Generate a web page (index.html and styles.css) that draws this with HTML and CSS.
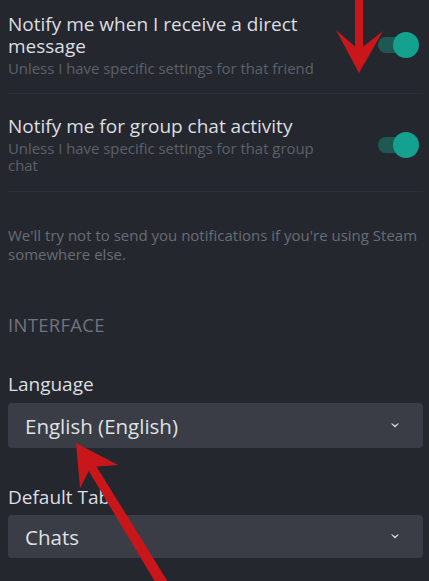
FILE: index.html
```html
<!DOCTYPE html>
<html lang="en">
<head>
<meta charset="utf-8">
<title>Settings</title>
<link rel="stylesheet" href="styles.css">
</head>
<body>
<main class="page">
  <section class="toggles">
    <div class="setting first">
      <div class="setting-text">
        <div class="setting-title">Notify me when I receive a direct message</div>
        <div class="setting-sub">Unless I have specific settings for that friend</div>
      </div>
      <div class="toggle"><span class="track"></span><span class="knob"></span></div>
    </div>
    <div class="setting">
      <div class="setting-text">
        <div class="setting-title">Notify me for group chat activity</div>
        <div class="setting-sub">Unless I have specific settings for that group chat</div>
      </div>
      <div class="toggle"><span class="track"></span><span class="knob"></span></div>
    </div>
  </section>
  <p class="note">We'll try not to send you notifications if you're using Steam somewhere else.</p>
  <h2 class="section-head">INTERFACE</h2>
  <div class="field">
    <label class="field-label">Language</label>
    <div class="select">
      <span class="select-value">English (English)</span>
      <svg class="chev" width="8" height="5" viewBox="0 0 8 5"><path d="M0 0.5 L4 4.5 L8 0.5 L6.6 0.5 L4 2.6 L1.4 0.5 Z" fill="#dfe1e4"/></svg>
    </div>
  </div>
  <div class="field">
    <label class="field-label">Default Tab</label>
    <div class="select">
      <span class="select-value">Chats</span>
      <svg class="chev" width="8" height="5" viewBox="0 0 8 5"><path d="M0 0.5 L4 4.5 L8 0.5 L6.6 0.5 L4 2.6 L1.4 0.5 Z" fill="#dfe1e4"/></svg>
    </div>
  </div>
</main>
<svg class="annot" width="429" height="581" viewBox="0 0 429 581">
  <g fill="#c8161b">
    <rect x="355" y="-2" width="8" height="58"/>
    <polygon points="336,30 359,50 383,31 359,73"/>
    <polygon points="84,463 93,461 173,590 160,590"/>
    <polygon points="76,443 118,465 91,467 80,488"/>
  </g>
</svg>
</body>
</html>
```

FILE: styles.css
```css
html, body {
  margin: 0;
  padding: 0;
}
body {
  background: #25272f;
  font-family: "Open Sans", "Noto Sans", sans-serif;
  color: #dcdee0;
  width: 429px;
  height: 581px;
  overflow: hidden;
  position: relative;
}
.page {
  padding: 0 6px 0 8px;
}
.setting {
  display: flex;
  align-items: center;
  justify-content: space-between;
  padding: 21px 0 17px;
  border-bottom: 1px solid #2c2f38;
}
.setting.first {
  padding-top: 13px;
  padding-bottom: 16px;
}
.setting-text {
  width: 330px;
}
.setting-title {
  font-size: 19px;
  line-height: 22px;
  color: #dcdee0;
}
.setting-sub {
  margin-top: 3px;
  font-size: 14.9px;
  line-height: 17px;
  color: #5c6069;
}
.toggle {
  position: relative;
  width: 41px;
  height: 26px;
  margin-right: 4px;
}
.track {
  position: absolute;
  left: 0;
  top: 5px;
  width: 36px;
  height: 16px;
  border-radius: 8px;
  background: #1d5853;
}
.knob {
  position: absolute;
  right: 0;
  top: 0;
  width: 26px;
  height: 26px;
  border-radius: 50%;
  background: #14a190;
}
.note {
  margin: 34px 0 0;
  font-size: 15px;
  line-height: 19px;
  color: #686c75;
}
.section-head {
  margin: 50px 0 0;
  font-size: 18.5px;
  line-height: 22px;
  font-weight: 400;
  letter-spacing: 0.3px;
  color: #70747c;
}
.field {
  display: flex;
  flex-direction: column;
}
.field-label {
  font-size: 19px;
  line-height: 22px;
  color: #dcdee0;
  margin: 37px 0 8px;
}
.field + .field .field-label {
  margin-top: 38px;
  margin-bottom: 7px;
}
.select {
  display: flex;
  align-items: center;
  justify-content: space-between;
  height: 45px;
  padding: 0 24px 0 17px;
  border-radius: 4px;
  background: #3a3d46;
}
.field + .field .select {
  height: 43px;
}
.select-value {
  font-size: 20.5px;
  color: #dfe1e3;
}
.annot {
  position: absolute;
  left: 0;
  top: 0;
  pointer-events: none;
}
```
